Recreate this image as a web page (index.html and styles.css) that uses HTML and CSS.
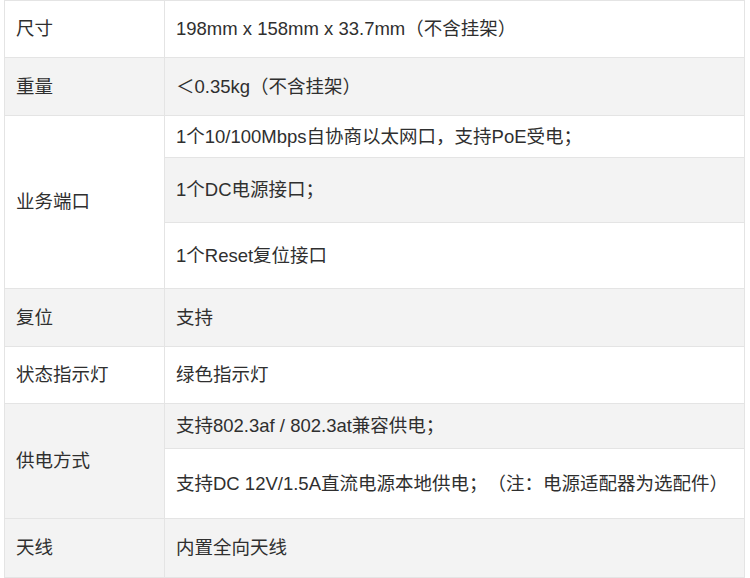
FILE: index.html
```html
<!DOCTYPE html>
<html lang="zh-CN">
<head>
<meta charset="utf-8">
<title>规格</title>
<link rel="stylesheet" href="styles.css">
</head>
<body>
<table class="spec">
  <tbody>
    <tr class="h57"><td class="key">尺寸</td><td class="val">198mm x 158mm x 33.7mm（不含挂架）</td></tr>
    <tr class="h58"><td class="key">重量</td><td class="val">＜0.35kg（不含挂架）</td></tr>
    <tr class="h42"><td class="key" rowspan="3">业务端口</td><td class="val">1个10/100Mbps自协商以太网口，支持PoE受电；</td></tr>
    <tr class="h65"><td class="val">1个DC电源接口；</td></tr>
    <tr class="h66"><td class="val">1个Reset复位接口</td></tr>
    <tr class="h58"><td class="key">复位</td><td class="val">支持</td></tr>
    <tr class="h57"><td class="key">状态指示灯</td><td class="val">绿色指示灯</td></tr>
    <tr class="h45"><td class="key" rowspan="2">供电方式</td><td class="val">支持802.3af / 802.3at兼容供电；</td></tr>
    <tr class="h70"><td class="val">支持DC 12V/1.5A直流电源本地供电；（注：电源适配器为选配件）</td></tr>
    <tr class="h59"><td class="key">天线</td><td class="val">内置全向天线</td></tr>
  </tbody>
</table>
</body>
</html>
```

FILE: styles.css
```css
html, body {
  margin: 0;
  padding: 0;
  background: #ffffff;
}

body {
  font-family: "Liberation Sans", "Noto Sans CJK SC", sans-serif;
  font-size: 18.5px;
  color: #2f2f2f;
  text-spacing-trim: space-all;
}

.spec {
  margin-left: 4px;
  width: 741px;
  border-collapse: collapse;
  table-layout: fixed;
}

.spec td {
  border: 1px solid #e4e4e4;
  padding: 0 11px;
  vertical-align: middle;
  line-height: 20px;
  white-space: nowrap;
}

.spec .key {
  width: 137px;
  background: #ffffff;
}

.spec tr:nth-child(even) td {
  background: #f3f3f3;
}

.h42 { height: 42px; }
.h45 { height: 45px; }
.h57 { height: 57px; }
.h58 { height: 58px; }
.h59 { height: 59px; }
.h65 { height: 65px; }
.h66 { height: 66px; }
.h70 { height: 70px; }
```
